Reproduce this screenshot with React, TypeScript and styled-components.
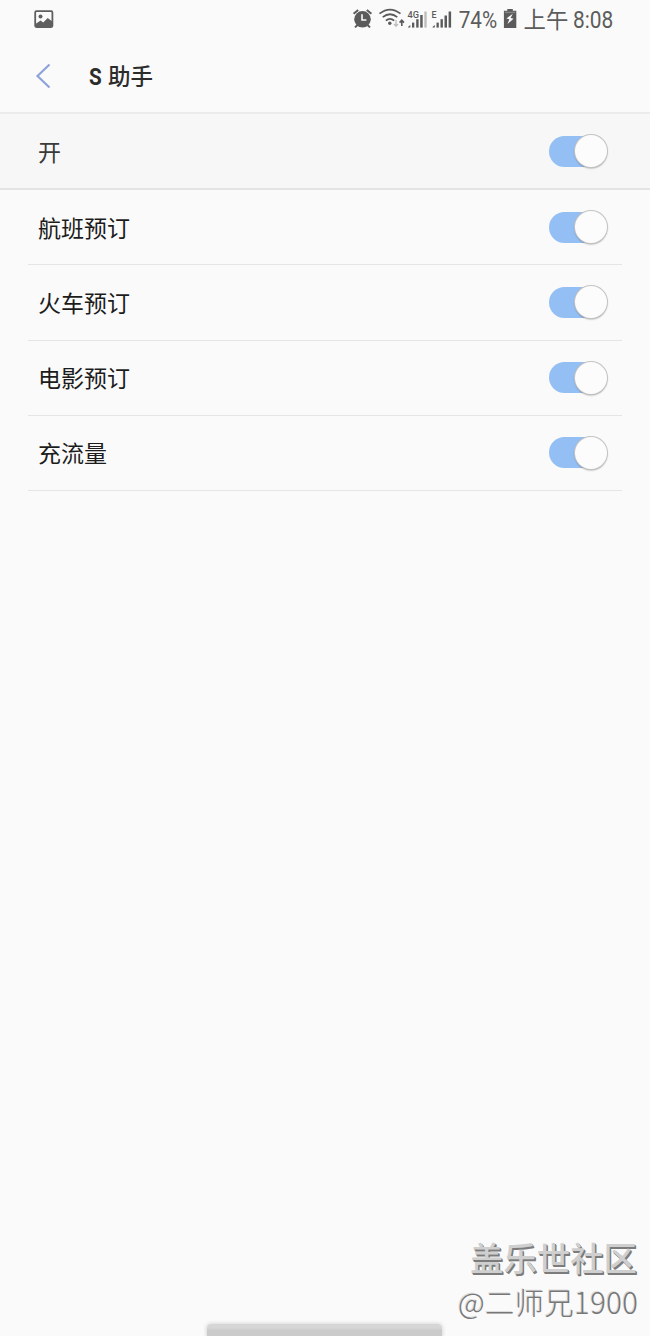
import React from 'react';
import styled, { createGlobalStyle } from 'styled-components';

const Global = createGlobalStyle`
  * { box-sizing: border-box; }
  body { margin: 0; background: #fafafa; }
`;

const Screen = styled.div`
  position: relative;
  display: flex;
  flex-direction: column;
  width: 650px;
  height: 1336px;
  overflow: hidden;
  background: #fafafa;
  color: #222;
  font-family: Roboto, 'Noto Sans CJK SC', sans-serif;
`;

const StatusBar = styled.div`
  display: flex;
  align-items: center;
  justify-content: space-between;
  height: 38px;
  padding: 0 36px 0 34px;
  color: #5c5c5c;
`;

const StatusGroup = styled.div`
  display: flex;
  align-items: center;
  height: 38px;
`;

const StatusText = styled.span<{ $width: number; $scale?: number; $size?: number }>`
  display: block;
  width: ${(p) => p.$width}px;
  padding-top: 1px;
  font-size: ${(p) => p.$size ?? 24}px;
  line-height: 38px;
  white-space: nowrap;
  transform: scaleX(${(p) => p.$scale ?? 1});
  transform-origin: left center;
`;

const Header = styled.header`
  display: flex;
  align-items: center;
  height: 76px;
  padding: 3px 0 0 35px;
  border-bottom: 2px solid #ebebeb;
`;

const BackIcon = styled.svg`
  display: block;
  margin-top: -1px;
`;

const Title = styled.h1`
  display: flex;
  margin: 0 0 0 37px;
  font-size: 22.5px;
  line-height: 30px;
  font-weight: 500;
  color: #2c2c2c;
`;

const TitleLatin = styled.span`
  width: 19px;
  font-size: 24px;
  font-weight: 700;
  transform: scaleX(0.86);
  transform-origin: left center;
`;

const MasterRow = styled.div`
  display: flex;
  align-items: center;
  justify-content: space-between;
  height: 76px;
  padding: 0 43px 0 38px;
  border-bottom: 2px solid #e4e4e4;
  background: #f7f7f7;
  color: #3a3a3a;
`;

const List = styled.div`
  display: flex;
  flex-direction: column;
  padding: 0 28px;
`;

const Row = styled.div`
  display: flex;
  align-items: center;
  justify-content: space-between;
  height: 75.25px;
  padding: 0 15px 0 10px;
  border-bottom: 1px solid #e5e5e5;
  color: #1c1c1c;
`;

const Label = styled.span`
  font-size: 23px;
  line-height: 34px;
  padding-top: 5px;
`;

const Track = styled.div`
  display: flex;
  align-items: center;
  justify-content: flex-end;
  width: 58px;
  height: 31px;
  border-radius: 16px;
  background: #94bff5;
`;

const Knob = styled.div`
  flex: none;
  width: 32px;
  height: 32px;
  border-radius: 50%;
  background: #fcfcfc;
  box-shadow: 0 0 0 1px #c4c4c4, 0 1px 1.5px 0.5px rgba(0, 0, 0, 0.3);
`;

const Watermark = styled.div`
  position: absolute;
  right: 12px;
  bottom: 14px;
  display: flex;
  flex-direction: column;
  align-items: flex-end;
  font-family: 'Noto Sans CJK SC', sans-serif;
  white-space: nowrap;
`;

const Community = styled.div`
  padding-right: 1px;
  font-size: 33.4px;
  line-height: 46px;
  font-weight: 500;
  color: #cfcfcf;
  text-shadow: 1px 1px 0 #7c7c7c, 1.5px 1.5px 0 #7c7c7c;
`;

const Author = styled.div`
  margin-right: -0.4px;
  font-size: 29.3px;
  line-height: 42px;
  font-weight: 300;
  letter-spacing: 0.4px;
  color: #777;
  text-shadow: -1px -1px 0 #dcdcdc;
`;

const HomeHandle = styled.div`
  position: absolute;
  left: 207px;
  bottom: -3px;
  width: 235px;
  height: 15px;
  border-radius: 4px;
  background: linear-gradient(#d6d6d6 0 4px, #cbcbcb 6px);
  box-shadow: 0 0 4px #cbcbcb;
`;

const Toggle = () => (
  <Track>
    <Knob />
  </Track>
);

const PictureIcon = () => (
  <svg width="20" height="19" viewBox="0 0 20 19">
    <rect x="1.2" y="1.2" width="17.2" height="15.8" rx="1.2" fill="none" stroke="#5f5f5f" strokeWidth="1.8" />
    <circle cx="6.5" cy="6.4" r="2" fill="#5f5f5f" />
    <path d="M1.5 14 L6.6 10.6 L9.2 12.4 L13.7 8 L18.3 11.6 V17 H1.5Z" fill="#5f5f5f" />
  </svg>
);

const StatusIcons = () => (
  <svg width="166" height="38" viewBox="352 0 166 38">
    <g fill="none" stroke="#5b5b5b" strokeWidth="2">
      <path d="M353.6 13.8 L358.2 10 M366.8 10 L371.4 13.8" />
      <path d="M357.2 25.2 L355 27.4 M367.8 25.2 L370 27.4" />
    </g>
    <circle cx="362.5" cy="19.3" r="8.3" fill="#5b5b5b" />
    <path d="M362 14.3 V20 H366.4" fill="none" stroke="#fbfbfb" strokeWidth="1.6" />
    <g fill="none" stroke="#5b5b5b" strokeWidth="1.7">
      <path d="M379.5 13.6 Q390 5.5 400.5 13.6" />
      <path d="M382.7 17.2 Q390 11.3 397.3 17.2" />
      <path d="M385.8 20.7 Q390 17 394.2 20.7" />
    </g>
    <circle cx="389.8" cy="23.2" r="1.7" fill="#5b5b5b" />
    <path d="M396 20 V26 M394 24 L396 26.3 L398 24" fill="none" stroke="#bdbdbd" strokeWidth="1.3" />
    <path d="M401.8 26 V20.6 M399.6 22.6 L401.8 20.2 L404 22.6" fill="none" stroke="#5b5b5b" strokeWidth="1.6" />
    <text x="407.5" y="17.8" fontFamily="Roboto, sans-serif" fontSize="9.5" fontWeight="500" fill="#5b5b5b" textLength="11.5" lengthAdjust="spacingAndGlyphs">4G</text>
    <g fill="#5b5b5b">
      <path d="M408 27.6 V27 L410.3 25 V27.6Z" />
      <rect x="412" y="22.6" width="2.3" height="5" />
      <rect x="416.2" y="19.2" width="2.4" height="8.4" />
      <rect x="420.2" y="15" width="2.5" height="12.6" />
      <path d="M432.5 27.6 V27 L434.8 25 V27.6Z" />
      <rect x="436.5" y="22.6" width="2.3" height="5" />
      <rect x="440.5" y="19.2" width="2.4" height="8.4" />
      <rect x="444.5" y="15.5" width="2.5" height="12.1" />
      <rect x="448.6" y="11.5" width="2.5" height="16.1" />
    </g>
    <rect x="424.3" y="11.5" width="2.4" height="16.1" fill="#bebebe" />
    <text x="431.5" y="17.8" fontFamily="Roboto, sans-serif" fontSize="9.5" fontWeight="500" fill="#5b5b5b" textLength="5" lengthAdjust="spacingAndGlyphs">E</text>
    <text x="458.7" y="27.8" fontFamily="Roboto, sans-serif" fontSize="24.4" fill="#5c5c5c" textLength="38.5" lengthAdjust="spacingAndGlyphs">74%</text>
    <path d="M507.3 9 H512.8 V10.7 H516.3 V28 H503.9 V10.7 H507.3Z" fill="#5b5b5b" />
    <path d="M504.8 12.4 H515.4" stroke="#858585" strokeWidth="1.4" />
    <path d="M512.8 13.8 L506.4 18.4 L509.4 19.3 L507.4 24 L513.6 18.7 L510.6 17.9Z" fill="#fbfbfb" />
  </svg>
);

const options = ['航班预订', '火车预订', '电影预订', '充流量'];

export default function App() {
  return (
    <Screen>
      <Global />
      <StatusBar>
        <PictureIcon />
        <StatusGroup>
          <StatusIcons />
          <StatusText $width={55} $size={22.4}>&nbsp;上午</StatusText>
          <StatusText $width={41} $scale={0.87}>8:08</StatusText>
        </StatusGroup>
      </StatusBar>
      <Header>
        <BackIcon width="17" height="26" viewBox="0 0 17 26">
          <path d="M14.5 1.5 L2.5 13 L14.5 24.5" fill="none" stroke="#8ea3d9" strokeWidth="2.2" />
        </BackIcon>
        <Title>
          <TitleLatin>S</TitleLatin>
          <span>助手</span>
        </Title>
      </Header>
      <MasterRow>
        <Label>开</Label>
        <Toggle />
      </MasterRow>
      <List>
        {options.map((name) => (
          <Row key={name}>
            <Label>{name}</Label>
            <Toggle />
          </Row>
        ))}
      </List>
      <Watermark>
        <Community>盖乐世社区</Community>
        <Author>@二师兄1900</Author>
      </Watermark>
      <HomeHandle />
    </Screen>
  );
}
